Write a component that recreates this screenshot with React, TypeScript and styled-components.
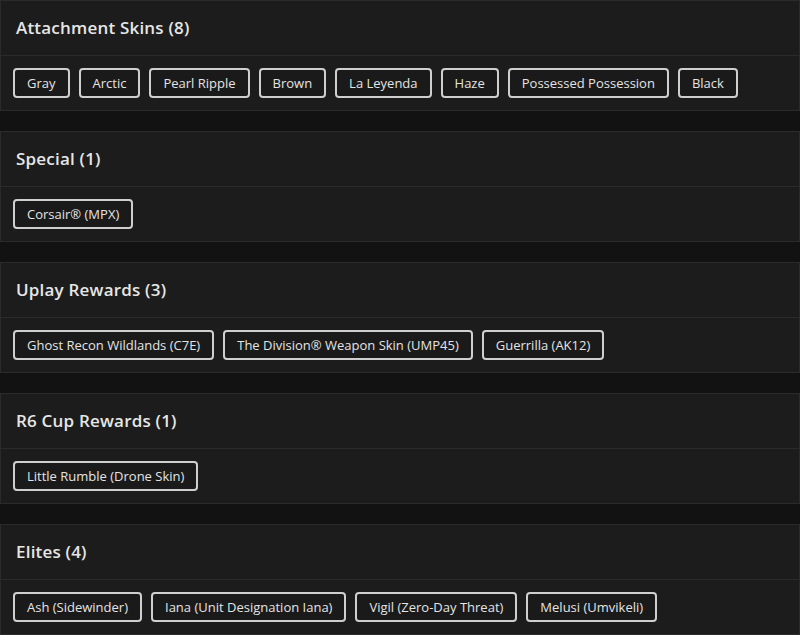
import React from "react";
import styled, { createGlobalStyle } from "styled-components";

const Global = createGlobalStyle`
  html, body { margin: 0; padding: 0; background: #121212; }
  body { font-family: "Open Sans", "Liberation Sans", sans-serif; color: #e8e8e8; }
`;

const Page = styled.div`
  display: flex;
  flex-direction: column;
  gap: 20px;
  width: 800px;
`;

const Card = styled.section`
  background: #1c1c1c;
  border: 1px solid #2b2b2b;
`;

const Header = styled.div`
  height: 54px;
  display: flex;
  align-items: center;
  padding: 0 15px;
  border-bottom: 1px solid #2b2b2b;
`;

const Title = styled.h2`
  margin: 0;
  margin-top: -1px;
  font-size: 17px;
  font-weight: 600;
  color: #e6e6e6;
  letter-spacing: 0.2px;
`;

const Body = styled.div`
  height: 54px;
  display: flex;
  align-items: center;
  flex-wrap: wrap;
  gap: 9px;
  padding: 0 12px;
  box-sizing: border-box;
`;

const Tag = styled.button`
  height: 30px;
  box-sizing: border-box;
  padding: 0 12px;
  background: #1a1a1a;
  border: 2px solid #cfcfcf;
  border-radius: 4px;
  color: #e4e4e4;
  font-family: "Open Sans", "Liberation Sans", sans-serif;
  font-size: 13px;
  line-height: 1;
  cursor: pointer;
`;

const sections: { title: string; items: string[] }[] = [
  {
    title: "Attachment Skins",
    items: ["Gray", "Arctic", "Pearl Ripple", "Brown", "La Leyenda", "Haze", "Possessed Possession", "Black"],
  },
  { title: "Special", items: ["Corsair® (MPX)"] },
  {
    title: "Uplay Rewards",
    items: ["Ghost Recon Wildlands (C7E)", "The Division® Weapon Skin (UMP45)", "Guerrilla (AK12)"],
  },
  { title: "R6 Cup Rewards", items: ["Little Rumble (Drone Skin)"] },
  {
    title: "Elites",
    items: ["Ash (Sidewinder)", "Iana (Unit Designation Iana)", "Vigil (Zero-Day Threat)", "Melusi (Umvikeli)"],
  },
];

export default function App() {
  return (
    <>
      <Global />
      <Page>
        {sections.map((s) => (
          <Card key={s.title}>
            <Header>
              <Title>
                {s.title} ({s.items.length})
              </Title>
            </Header>
            <Body>
              {s.items.map((i) => (
                <Tag key={i}>{i}</Tag>
              ))}
            </Body>
          </Card>
        ))}
      </Page>
    </>
  );
}
